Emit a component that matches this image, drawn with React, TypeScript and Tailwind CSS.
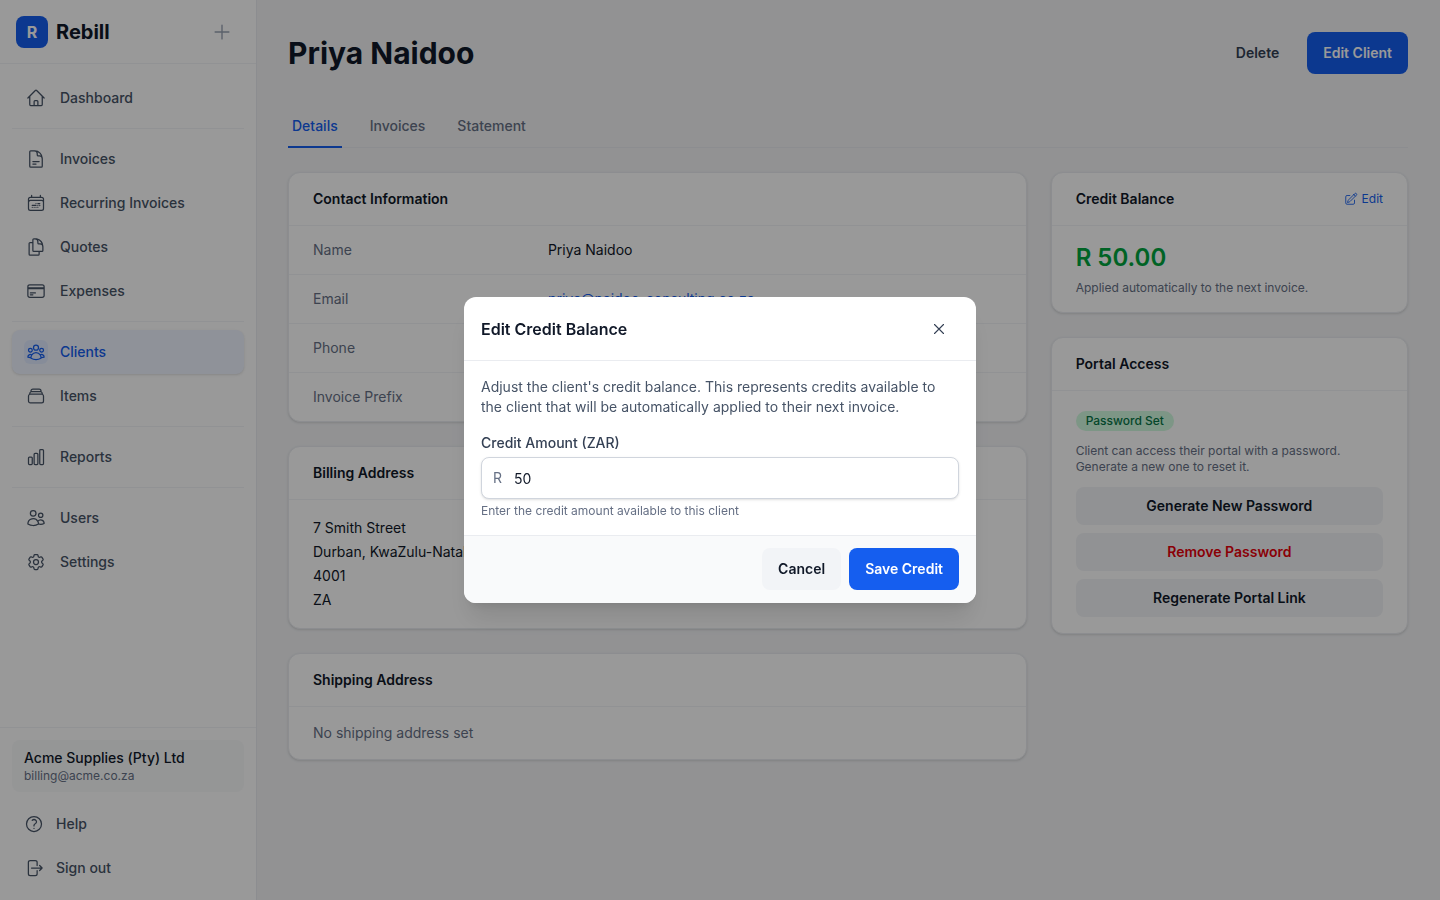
import type { ComponentType, ReactNode } from 'react';
import {
  HiOutlineArrowRightOnRectangle,
  HiOutlineCalendarDateRange,
  HiOutlineChartBar,
  HiOutlineCog6Tooth,
  HiOutlineCreditCard,
  HiOutlineDocumentDuplicate,
  HiOutlineDocumentText,
  HiOutlineHome,
  HiOutlinePencilSquare,
  HiOutlinePlus,
  HiOutlineQuestionMarkCircle,
  HiOutlineRectangleStack,
  HiOutlineUserGroup,
  HiOutlineUsers,
  HiOutlineXMark,
} from 'react-icons/hi2';

type Icon = ComponentType<{ className?: string }>;

const navGroups: { label: string; icon: Icon; active?: boolean }[][] = [
  [{ label: 'Dashboard', icon: HiOutlineHome }],
  [
    { label: 'Invoices', icon: HiOutlineDocumentText },
    { label: 'Recurring Invoices', icon: HiOutlineCalendarDateRange },
    { label: 'Quotes', icon: HiOutlineDocumentDuplicate },
    { label: 'Expenses', icon: HiOutlineCreditCard },
  ],
  [
    { label: 'Clients', icon: HiOutlineUserGroup, active: true },
    { label: 'Items', icon: HiOutlineRectangleStack },
  ],
  [{ label: 'Reports', icon: HiOutlineChartBar }],
  [
    { label: 'Users', icon: HiOutlineUsers },
    { label: 'Settings', icon: HiOutlineCog6Tooth },
  ],
];

function Sidebar() {
  return (
    <aside className="relative z-10 flex h-screen w-64 shrink-0 flex-col bg-white shadow-[1px_0_0_#eaecf0]">
      <div className="flex h-16 shrink-0 items-center justify-between border-b border-[#f2f4f7] pl-4 pr-[23px]">
        <div className="flex items-center gap-2">
          <div className="flex size-8 items-center justify-center rounded-lg bg-[#155eef] text-base font-bold text-white">R</div>
          <span className="text-xl font-bold text-[#101828]">Rebill</span>
        </div>
        <HiOutlinePlus className="size-[22px] text-[#98a2b3]" />
      </div>
      <nav className="flex-1 px-3 pt-3">
        {navGroups.map((group, i) => (
          <div key={i}>
            {i > 0 && <div className="my-2 h-px bg-[#f2f4f7]" />}
            {group.map((item) => (
              <div
                key={item.label}
                className={
                  item.active
                    ? 'flex h-11 items-center gap-3 rounded-lg bg-[#eff4ff] px-3 text-sm font-medium text-[#155eef] shadow-sm'
                    : 'flex h-11 items-center gap-3 rounded-lg px-3 text-sm font-medium text-[#475467]'
                }
              >
                <span className={item.active ? 'flex size-6 items-center justify-center rounded-md bg-[#e0eaff]' : 'flex size-6 items-center justify-center'}>
                  <item.icon className="size-5" />
                </span>
                {item.label}
              </div>
            ))}
          </div>
        ))}
      </nav>
      <div className="border-t border-[#f2f4f7] px-3 pb-[10px] pt-3">
        <div className="mb-[10px] h-[52px] rounded-lg bg-[#f9fafb] px-3 py-2">
          <div className="text-sm font-medium leading-5 text-[#101828]">Acme Supplies (Pty) Ltd</div>
          <div className="text-xs leading-4 text-[#667085]">billing@acme.co.za</div>
        </div>
        <div className="flex h-11 items-center gap-3 px-3 text-sm font-medium text-[#475467]">
          <HiOutlineQuestionMarkCircle className="size-5" />
          Help
        </div>
        <div className="flex h-11 items-center gap-3 px-3 text-sm font-medium text-[#475467]">
          <HiOutlineArrowRightOnRectangle className="size-5" />
          Sign out
        </div>
      </div>
    </aside>
  );
}

function Card({ title, action, children }: { title: string; action?: ReactNode; children: ReactNode }) {
  return (
    <section className="rounded-xl border border-[#eaecf0] bg-white shadow-sm">
      <div className="flex h-[53px] items-center justify-between border-b border-[#f2f4f7] px-6">
        <h3 className="text-sm font-semibold text-[#101828]">{title}</h3>
        {action}
      </div>
      {children}
    </section>
  );
}

function Row({ label, children, last }: { label: string; children: ReactNode; last?: boolean }) {
  return (
    <div className={last ? 'grid h-12 grid-cols-3 items-center gap-4 px-6 text-sm' : 'grid h-[49px] grid-cols-3 items-center gap-4 border-b border-[#f2f4f7] px-6 text-sm'}>
      <dt className="text-[#667085]">{label}</dt>
      <dd className="col-span-2 text-[#101828]">{children}</dd>
    </div>
  );
}

function PortalButton({ label, danger }: { label: string; danger?: boolean }) {
  return (
    <button className={danger ? 'h-[38px] w-full rounded-lg bg-[#f2f4f7] text-sm font-semibold text-[#e7000b]' : 'h-[38px] w-full rounded-lg bg-[#f2f4f7] text-sm font-semibold text-[#101828]'}>
      {label}
    </button>
  );
}

function ClientPage() {
  return (
    <main className="min-w-0 flex-1 bg-[#f3f4f6] px-8 pt-8">
      <div className="flex h-[42px] items-center justify-between">
        <h1 className="text-3xl font-bold text-[#101828]">Priya Naidoo</h1>
        <div className="flex items-center gap-3">
          <button className="h-[42px] px-4 text-sm font-semibold text-[#344054]">Delete</button>
          <button className="h-[42px] rounded-lg bg-[#155eef] px-4 text-sm font-semibold text-white">Edit Client</button>
        </div>
      </div>

      <div className="mt-[32px] flex h-[42px] gap-6 border-b border-[#eaecf0]">
        <div className="-mb-px flex items-center border-b-2 border-[#155eef] px-1 text-sm font-medium text-[#155eef]">Details</div>
        <div className="-mb-px flex items-center border-b-2 border-transparent px-1 text-sm font-medium text-[#667085]">Invoices</div>
        <div className="-mb-px flex items-center border-b-2 border-transparent px-1 text-sm font-medium text-[#667085]">Statement</div>
      </div>

      <div className="mt-6 grid grid-cols-3 items-start gap-6">
        <div className="col-span-2 flex flex-col gap-6">
          <Card title="Contact Information">
            <dl>
              <Row label="Name">Priya Naidoo</Row>
              <Row label="Email"><span className="text-[#155eef]">priya@naidoo-consulting.co.za</span></Row>
              <Row label="Phone">+27 82 555 0142</Row>
              <Row label="Invoice Prefix" last>PN</Row>
            </dl>
          </Card>
          <Card title="Billing Address">
            <div className="px-6 py-4 text-sm leading-6 text-[#101828]">
              <div>7 Smith Street</div>
              <div>Durban, KwaZulu-Natal</div>
              <div>4001</div>
              <div>ZA</div>
            </div>
          </Card>
          <Card title="Shipping Address">
            <div className="px-6 py-4 text-sm leading-5 text-[#667085]">No shipping address set</div>
          </Card>
        </div>

        <div className="flex flex-col gap-6">
          <Card
            title="Credit Balance"
            action={
              <span className="flex items-center gap-1 text-xs font-normal text-[#155eef]">
                <HiOutlinePencilSquare className="size-[14px]" />
                Edit
              </span>
            }
          >
            <div className="px-6 pb-4 pt-4">
              <div className="text-2xl font-semibold leading-8 text-[#00a63e]">R 50.00</div>
              <p className="mt-1.5 text-xs leading-4 text-[#667085]">Applied automatically to the next invoice.</p>
            </div>
          </Card>
          <Card title="Portal Access">
            <div className="px-6 pb-4 pt-4">
              <span className="inline-flex h-5 items-center rounded-full bg-[#d1fadf] px-2.5 text-xs font-medium text-[#067647]">Password Set</span>
              <p className="mt-3 text-xs leading-4 text-[#667085]">Client can access their portal with a password. Generate a new one to reset it.</p>
              <div className="mt-3 flex flex-col gap-2">
                <PortalButton label="Generate New Password" />
                <PortalButton label="Remove Password" danger />
                <PortalButton label="Regenerate Portal Link" />
              </div>
            </div>
          </Card>
        </div>
      </div>
    </main>
  );
}

function CreditModal() {
  return (
    <div className="fixed inset-0 z-20 flex items-center justify-center bg-black/40">
      <div className="w-[512px] overflow-hidden rounded-xl bg-white shadow-xl">
        <div className="flex h-[64px] items-center justify-between border-b border-[#eaecf0] pl-[17px] pr-[28px]">
          <h2 className="text-base font-semibold text-[#101828]">Edit Credit Balance</h2>
          <HiOutlineXMark className="size-[18px] text-[#344054]" />
        </div>
        <div className="px-[17px] pb-4 pt-4">
          <p className="text-sm leading-5 text-[#475467]">
            Adjust the client's credit balance. This represents credits available to the client that will be automatically applied to their next invoice.
          </p>
          <label className="mt-4 block text-sm font-medium leading-5 text-[#344054]">Credit Amount (ZAR)</label>
          <div className="mt-1 flex h-[42px] items-center rounded-lg border border-[#d0d5dd] bg-white pl-[11px] pr-3 shadow-sm">
            <span className="w-[21px] text-sm text-[#667085]">R</span>
            <span className="pt-0.5 text-sm text-[#101828]">50</span>
          </div>
          <p className="mt-1 text-xs leading-4 text-[#667085]">Enter the credit amount available to this client</p>
        </div>
        <div className="flex h-[68px] items-start justify-end gap-2 border-t border-[#eaecf0] bg-[#f9fafb] px-[17px] pt-3">
          <button className="h-[42px] rounded-lg bg-[#f2f4f7] px-4 text-sm font-semibold text-[#101828]">Cancel</button>
          <button className="h-[42px] rounded-lg bg-[#155eef] px-4 text-sm font-semibold text-white">Save Credit</button>
        </div>
      </div>
    </div>
  );
}

export default function App() {
  return (
    <div className="flex h-screen overflow-hidden font-['Inter',sans-serif]">
      <Sidebar />
      <ClientPage />
      <CreditModal />
    </div>
  );
}
